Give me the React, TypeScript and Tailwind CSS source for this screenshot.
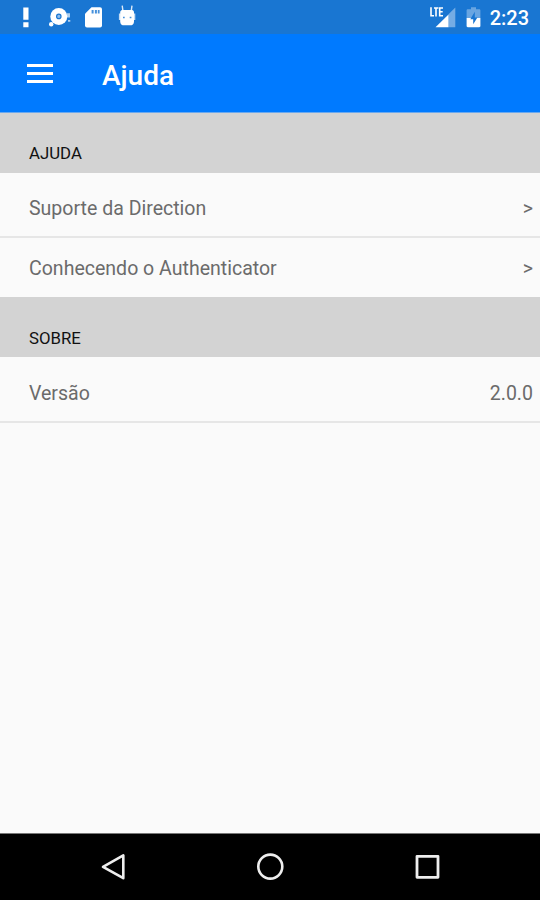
import React from 'react';

interface Item {
  label: string;
  value: string;
  className: string;
}

interface Section {
  title: string;
  className: string;
  items: Item[];
}

const sections: Section[] = [
  {
    title: 'AJUDA',
    className: 'pb-[10px]',
    items: [
      { label: 'Suporte da Direction', value: '>', className: 'h-[65px] border-b-2 pb-[15px]' },
      { label: 'Conhecendo o Authenticator', value: '>', className: 'h-[59px] pb-4' },
    ],
  },
  {
    title: 'SOBRE',
    className: 'pb-[9px]',
    items: [{ label: 'Versão', value: '2.0.0', className: 'h-[66px] border-b-2 pb-[15px]' }],
  },
];

const StatusBar = () => (
  <div className="flex h-[34px] shrink-0 items-start justify-between bg-[#1976d2] text-white">
    <div className="flex">
      <svg className="ml-[22px]" width="8" height="34" fill="currentColor">
        <path d="M1.3 7.5h5.2v12.3H1.3zM1.3 22.3h5.2v5H1.3z" />
      </svg>
      <svg className="ml-[18px]" width="25" height="34" fill="currentColor">
        <circle cx="10.8" cy="16.4" r="8.5" />
        <circle cx="10.8" cy="16.4" r="2.2" fill="#8fbdec" stroke="#1976d2" strokeWidth="1.2" />
        <circle cx="3.2" cy="24.3" r="2.2" />
        <path d="M19 13.2h3v4.3h-3zM20 20h2.3v1.8H20z" opacity=".65" />
      </svg>
      <svg className="ml-[11px]" width="19" height="34" fill="currentColor">
        <path d="M7.5 7.3H16a2 2 0 0 1 2 2v16.1a2 2 0 0 1-2 2H3a2 2 0 0 1-2-2V13.7z" />
        <path d="M7.6 10h2v3.5h-2zM10.9 10h2v3.5h-2zM13.8 10h1.8v3.5h-1.8z" fill="#1976d2" opacity=".8" />
      </svg>
      <svg className="ml-[15px]" width="19" height="34" fill="currentColor">
        <path d="M4.2 5.6l.8 5.7M14 5.6l-.8 5.7" stroke="currentColor" strokeWidth="1.4" opacity=".85" />
        <path d="M2.2 12.3c0-1.7 1.2-2.3 3-2.3h7.8c1.8 0 3 .6 3 2.3v9.1c0 2.5-1.6 3.9-4 3.9H6.2c-2.4 0-4-1.4-4-3.9z" />
        <path d="M.9 13.5h2v6.5h-2zM15.3 13.5h2v6.5h-2z" opacity=".75" />
        <path d="M5 16.7h1.7v1.5H5zM11.7 16.7h1.7v1.5h-1.7z" fill="#1976d2" opacity=".8" />
      </svg>
    </div>
    <div className="flex">
      <svg width="27" height="34" fill="currentColor">
        <path d="M26.3 7.5v19.7h-6.8V14.3z" opacity=".4" />
        <path d="M19.5 14.5v12.7H6.5z" />
        <path d="M2 7.3v8.4h3M5 8h4.4M7 8v8.4M14 8h-3.3v7.7H14M10.7 11.8h3" fill="none" stroke="currentColor" strokeWidth="1.6" />
      </svg>
      <svg className="ml-[9px]" width="17" height="34" fill="currentColor">
        <path d="M6 7.3h5v2h3.2c.7 0 1.2.5 1.2 1.2V18H1.6v-7.5c0-.7.5-1.2 1.2-1.2H6z" opacity=".35" />
        <path d="M1.6 18h13.8v8c0 .7-.5 1.2-1.2 1.2H2.8c-.7 0-1.2-.5-1.2-1.2z" />
        <path d="M9.8 11.8l-4.5 7.5h2.9v4.9l4.2-6.8H9.8z" fill="#1976d2" />
      </svg>
      <span className="ml-2 mr-[11px] mt-[5px] text-[20px] font-medium leading-[27px]">2:23</span>
    </div>
  </div>
);

const AppBar = () => (
  <header className="flex h-[79px] shrink-0 items-center border-b border-[#6aa9ef] bg-[#007aff] text-white">
    <button className="ml-[27px] flex w-[26px] flex-col gap-[5px]" aria-label="Menu">
      <span className="h-[3px] w-full bg-white" />
      <span className="h-[3px] w-full bg-white" />
      <span className="h-[3px] w-full bg-white" />
    </button>
    <h1 className="ml-[49px] mt-[6px] text-[28px] font-medium leading-8">Ajuda</h1>
  </header>
);

const NavigationBar = () => (
  <nav className="flex h-[67px] shrink-0 items-center border-t border-[#777] bg-black text-[#eee]">
    <svg className="ml-[100px]" width="28" height="30" fill="none" stroke="currentColor" strokeWidth="2.6" strokeLinejoin="round">
      <path d="M23.3 3.4v22.8L3 14.8z" />
    </svg>
    <svg className="ml-[127px]" width="30" height="30" fill="none" stroke="currentColor" strokeWidth="2.6">
      <circle cx="15.3" cy="14.6" r="12" />
    </svg>
    <svg className="ml-[128px]" width="30" height="30" fill="none" stroke="currentColor" strokeWidth="2.8" strokeLinejoin="round">
      <path d="M4 4.3h21v21H4z" />
    </svg>
  </nav>
);

const App: React.FC = () => {
  return (
    <div className="flex h-[900px] w-[540px] flex-col overflow-hidden bg-[#fafafa] font-['Roboto',sans-serif]">
      <StatusBar />
      <AppBar />
      <main className="flex-1">
        {sections.map((section) => (
          <section key={section.title}>
            <h2 className={`${section.className} flex h-[60px] items-end bg-[#d3d3d3] pl-[29px] text-[16.8px] leading-5 text-[#111]`}>
              {section.title}
            </h2>
            {section.items.map((item) => (
              <div
                key={item.label}
                className={`${item.className} flex items-end justify-between border-[#e6e6e6] pl-[29px] pr-[7px] text-[19.55px] leading-6 text-[#6b6b6b]`}
              >
                <span>{item.label}</span>
                <span>{item.value}</span>
              </div>
            ))}
          </section>
        ))}
      </main>
      <NavigationBar />
    </div>
  );
};

export default App;
